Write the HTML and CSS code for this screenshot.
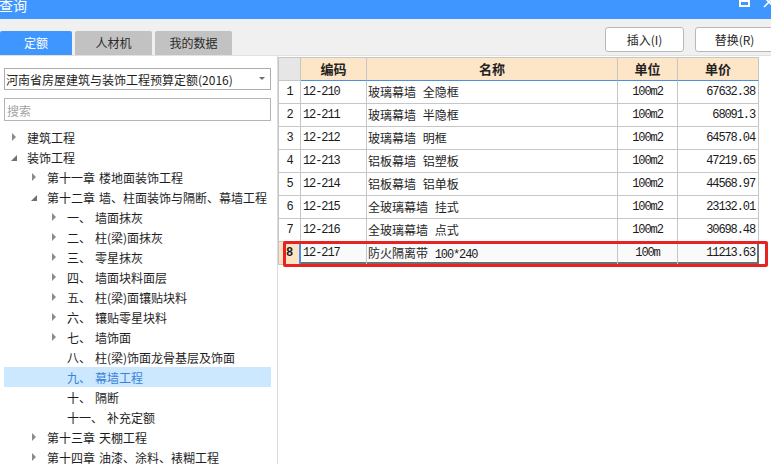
FILE: index.html
```html
<!DOCTYPE html>
<html lang="zh">
<head>
<meta charset="utf-8">
<title>查询</title>
<link rel="stylesheet" href="styles.css">
</head>
<body>
<div class="win">
  <div class="titlebar">
    <span class="title">查询</span>
    <svg class="winctl" width="32" height="19" viewBox="0 0 32 19">
      <rect x="1" y="-3" width="9" height="9" fill="none" stroke="#fff" stroke-width="2"/>
      <rect x="1" y="-3" width="9" height="5" fill="#fff"/>
      <path d="M25 -3 L35 7 M25 7 L35 -3" stroke="#fff" stroke-width="1.6" fill="none"/>
    </svg>
  </div>
  <div class="toolbar">
    <div class="tabs">
      <div class="tab active">定额</div>
      <div class="tab">人材机</div>
      <div class="tab">我的数据</div>
    </div>
    <div class="actions">
      <button class="btn">插入(I)</button>
      <button class="btn">替换(R)</button>
    </div>
  </div>
  <div class="content">
    <aside class="side">
      <div class="select"><span>河南省房屋建筑与装饰工程预算定额(2016)</span><i class="caret"></i></div>
      <div class="search">搜索</div>
      <ul class="tree">
        <li class="l0"><i class="arr closed"></i><span>建筑工程</span></li>
        <li class="l0"><i class="arr open"></i><span>装饰工程</span></li>
        <li class="l1"><i class="arr closed"></i><span>第十一章 楼地面装饰工程</span></li>
        <li class="l1"><i class="arr open"></i><span>第十二章 墙、柱面装饰与隔断、幕墙工程</span></li>
        <li class="l2"><i class="arr closed"></i><span>一、 墙面抹灰</span></li>
        <li class="l2"><i class="arr closed"></i><span>二、 柱(梁)面抹灰</span></li>
        <li class="l2"><i class="arr closed"></i><span>三、 零星抹灰</span></li>
        <li class="l2"><i class="arr closed"></i><span>四、 墙面块料面层</span></li>
        <li class="l2"><i class="arr closed"></i><span>五、 柱(梁)面镶贴块料</span></li>
        <li class="l2"><i class="arr closed"></i><span>六、 镶贴零星块料</span></li>
        <li class="l2"><i class="arr closed"></i><span>七、 墙饰面</span></li>
        <li class="l2"><i class="arr"></i><span>八、 柱(梁)饰面龙骨基层及饰面</span></li>
        <li class="l2 selected"><i class="arr"></i><span>九、 幕墙工程</span></li>
        <li class="l2"><i class="arr"></i><span>十、 隔断</span></li>
        <li class="l2"><i class="arr"></i><span>十一、 补充定额</span></li>
        <li class="l1"><i class="arr closed"></i><span>第十三章 天棚工程</span></li>
        <li class="l1"><i class="arr closed"></i><span>第十四章 油漆、涂料、裱糊工程</span></li>
      </ul>
    </aside>
    <main class="gridwrap">
      <div class="grid">
        <div class="row head">
          <div class="c rn"></div>
          <div class="c">编码</div>
          <div class="c">名称</div>
          <div class="c">单位</div>
          <div class="c">单价</div>
        </div>
        <div class="row">
          <div class="c rn">1</div><div class="c code">12-210</div><div class="c name">玻璃幕墙 全隐框</div><div class="c unit">100m2</div><div class="c price">67632.38</div>
        </div>
        <div class="row">
          <div class="c rn">2</div><div class="c code">12-211</div><div class="c name">玻璃幕墙 半隐框</div><div class="c unit">100m2</div><div class="c price">68091.3</div>
        </div>
        <div class="row">
          <div class="c rn">3</div><div class="c code">12-212</div><div class="c name">玻璃幕墙 明框</div><div class="c unit">100m2</div><div class="c price">64578.04</div>
        </div>
        <div class="row">
          <div class="c rn">4</div><div class="c code">12-213</div><div class="c name">铝板幕墙 铝塑板</div><div class="c unit">100m2</div><div class="c price">47219.65</div>
        </div>
        <div class="row">
          <div class="c rn">5</div><div class="c code">12-214</div><div class="c name">铝板幕墙 铝单板</div><div class="c unit">100m2</div><div class="c price">44568.97</div>
        </div>
        <div class="row">
          <div class="c rn">6</div><div class="c code">12-215</div><div class="c name">全玻璃幕墙 挂式</div><div class="c unit">100m2</div><div class="c price">23132.01</div>
        </div>
        <div class="row">
          <div class="c rn">7</div><div class="c code">12-216</div><div class="c name">全玻璃幕墙 点式</div><div class="c unit">100m2</div><div class="c price">30698.48</div>
        </div>
        <div class="row current">
          <div class="c rn">8</div><div class="c code">12-217</div><div class="c name">防火隔离带 <span class="mono">100*240</span></div><div class="c unit">100m</div><div class="c price">11213.63</div>
        </div>
      </div>
      <div class="mark"></div>
    </main>
  </div>
</div>
</body>
</html>
```

FILE: styles.css
```css
* { box-sizing: border-box; }
html, body {
  margin: 0;
  padding: 0;
  width: 771px;
  height: 464px;
  overflow: hidden;
  background: #fff;
}
body {
  font-family: "Noto Sans CJK SC", "Microsoft YaHei", sans-serif;
  font-size: 12px;
  color: #1e1e1e;
}
.win {
  display: flex;
  flex-direction: column;
  height: 464px;
}

/* title bar */
.titlebar {
  height: 19px;
  flex: none;
  background: #4096ff;
  color: #fff;
  display: flex;
  align-items: flex-start;
  overflow: hidden;
}
.title {
  display: block;
  font-size: 14px;
  line-height: 20px;
  margin-top: -5px;
  margin-left: -1px;
}
.winctl {
  margin-left: auto;
  display: block;
  flex: none;
}

/* toolbar */
.toolbar {
  height: 36px;
  flex: none;
  background: #f0f0f0;
  display: flex;
}
.tabs {
  display: flex;
  gap: 3px;
  align-self: flex-end;
}
.tab {
  height: 24px;
  line-height: 24px;
  width: 77px;
  text-align: center;
  background: #c2c2c2;
  color: #2a2a2a;
  border-radius: 2px 2px 0 0;
}
.tab.active {
  width: 72px;
  background: #4096ff;
  color: #fff;
}
.actions {
  margin-left: auto;
  margin-right: -3px;
  margin-top: 8px;
  display: flex;
  gap: 11px;
}
.btn {
  width: 79px;
  height: 25px;
  padding: 0;
  font-family: inherit;
  font-size: 12px;
  color: #262626;
  background: #fff;
  border: 1px solid #b8b8b8;
  border-radius: 3px;
}

/* content */
.content {
  flex: 1;
  display: flex;
  border-top: 1px solid #e2e2e2;
  min-height: 0;
}
.side {
  width: 278px;
  flex: none;
  border-right: 1px solid #dadada;
  padding-top: 12px;
  overflow: hidden;
}
.select {
  margin-left: 4px;
  width: 267px;
  height: 22px;
  border: 1px solid #adadad;
  display: flex;
  align-items: center;
  padding: 0 5px 0 1px;
}
.select span { flex: 1; white-space: nowrap; }
.caret {
  width: 0;
  height: 0;
  border-top: 3px solid #6e6e6e;
  border-left: 3px solid transparent;
  border-right: 3px solid transparent;
  margin-bottom: 1px;
}
.search {
  margin: 8px 0 6px 4px;
  width: 267px;
  height: 23px;
  border: 1px solid #b4b4b4;
  color: #a3a3a3;
  line-height: 23px;
  padding-left: 2px;
}

.tree {
  list-style: none;
  margin: 0;
  padding: 0 6px 0 4px;
  word-spacing: 1.3px;
}
.tree li {
  height: 20px;
  display: flex;
  align-items: center;
  white-space: nowrap;
}
.tree li.l0 { padding-left: 8px; }
.tree li.l1 { padding-left: 28px; }
.tree li.l2 { padding-left: 48px; }
.tree li.selected {
  background: #cce8ff;
  color: #3b82d9;
}
.arr {
  width: 15px;
  flex: none;
  display: flex;
  align-items: center;
  height: 20px;
}
.arr.closed::before {
  content: "";
  width: 0;
  height: 0;
  border-left: 4px solid #8c8c8c;
  border-top: 4px solid transparent;
  border-bottom: 4px solid transparent;
}
.arr.open::before {
  content: "";
  width: 0;
  height: 0;
  margin-left: -1px;
  margin-top: 2px;
  border-bottom: 6px solid #707070;
  border-left: 6px solid transparent;
}

/* grid */
.gridwrap {
  flex: 1;
  position: relative;
  background: #fff;
}
.grid {
  margin-top: 1px;
  width: 481px;
  border-left: 1px solid #c6c6c6;
  border-top: 1px solid #c6c6c6;
}
.row {
  display: grid;
  grid-template-columns: 22px 66px 251px 60px 81px;
}
.c {
  height: 23px;
  line-height: 22px;
  border-right: 1px solid #c6c6c6;
  border-bottom: 1px solid #c6c6c6;
  white-space: nowrap;
  overflow: hidden;
}
.head .c {
  background: #fde5c7;
  font-weight: bold;
  text-align: center;
  color: #222;
  font-size: 13px;
  border-bottom-color: #4a90e2;
}
.head .c.rn {
  background: #e6e6e6;
  border-bottom-color: #c6c6c6;
}
.rn, .code, .unit, .price, .mono {
  font-family: "Liberation Mono", "DejaVu Sans Mono", monospace;
  font-size: 12px;
  letter-spacing: -1.1px;
  color: #1a1a1a;
}
.mono { word-spacing: 0; }
.rn { text-align: center; }
.code { padding-left: 2px; }
.name { padding-left: 1px; word-spacing: 4px; }
.unit { text-align: center; }
.price { text-align: right; padding-right: 3px; }

.current .c { background: #fafafa; box-shadow: inset 0 -2px #6f6f6f; }
.current .c.rn {
  background: #fde3c4;
  box-shadow: none;
  border-right: 2px solid #4a90e2;
  font-weight: bold;
}
.current .c.price {
  border-right-color: #6f6f6f;
  box-shadow: inset 0 -2px #6f6f6f, inset -1px 0 #6f6f6f;
}

.mark {
  position: absolute;
  left: 5px;
  top: 185px;
  width: 485px;
  height: 26px;
  border: 3px solid #e62222;
  border-radius: 2px;
}
```
